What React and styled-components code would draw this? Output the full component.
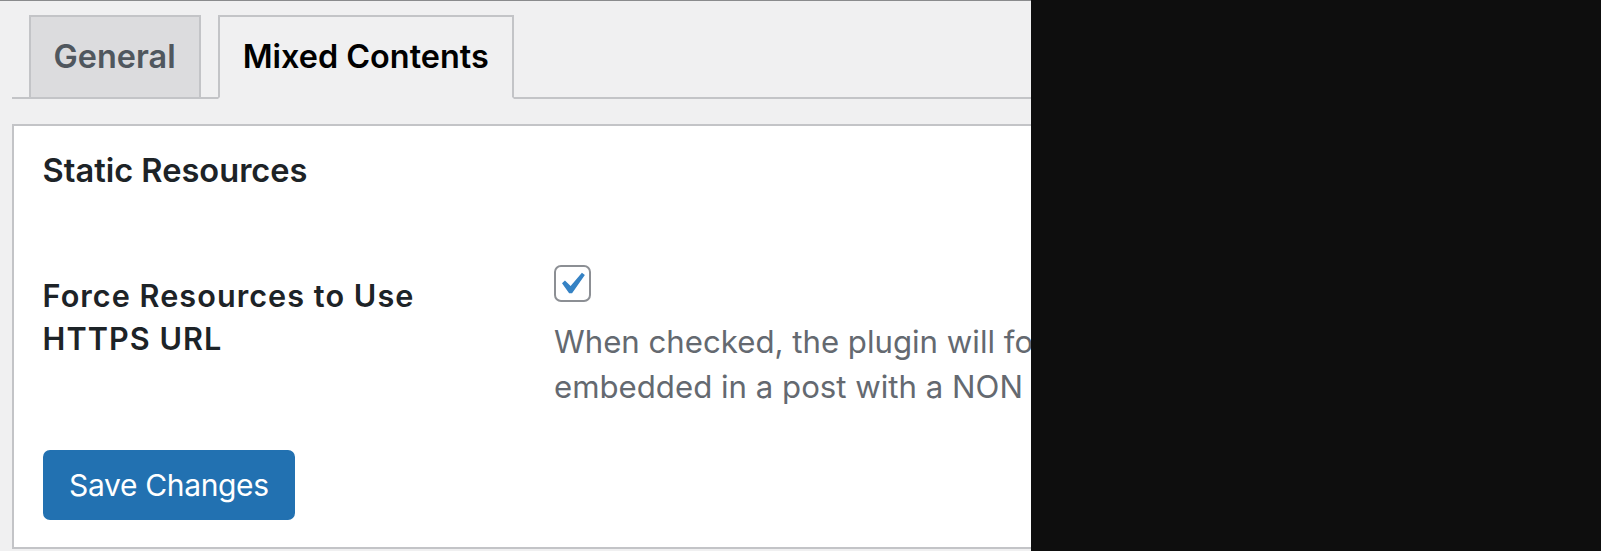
import React from "react";
import styled, { createGlobalStyle } from "styled-components";

const Global = createGlobalStyle`
  html, body { margin: 0; padding: 0; }
  body {
    background: #0e0e0e;
    font-family: Inter, "Noto Sans", "Liberation Sans", sans-serif;
  }
  * { box-sizing: border-box; }
`;

const Frame = styled.div`
  display: flex;
  width: 1601px;
  height: 551px;
  overflow: hidden;
`;

const Page = styled.div`
  flex: none;
  width: 1031px;
  height: 551px;
  overflow: hidden;
  background: #f0f0f1;
  border-top: 1px solid #8a8b8d;
  padding-left: 12px;
`;

const Blackout = styled.div`
  flex: 1;
  background: #0e0e0e;
`;

const TabBar = styled.nav`
  display: flex;
  gap: 17px;
  padding: 14px 0 0 16.6px;
  border-bottom: 2px solid #c3c4c7;
`;

const Tab = styled.a`
  display: block;
  margin-bottom: -2px;
  padding: 12px 23px 12px 23px;
  border: 2px solid #c3c4c7;
  border-bottom-color: ${(p) => (p.$active ? "#f0f0f1" : "#c3c4c7")};
  background: ${(p) => (p.$active ? "#f0f0f1" : "#dcdcde")};
  color: ${(p) => (p.$active ? "#000" : "#50575e")};
  font-size: 32.4px;
  font-weight: 600;
  line-height: 56px;
  white-space: nowrap;
  text-decoration: none;
`;

const Panel = styled.section`
  margin-top: 25px;
  margin-right: -40px;
  padding: 21px 0 27px 28.6px;
  background: #fff;
  border: 2px solid #c3c4c7;
`;

const Heading = styled.h2`
  margin: 0;
  color: #1d2327;
  font-size: 32.6px;
  font-weight: 600;
  line-height: 46px;
`;

const FormRow = styled.div`
  display: grid;
  grid-template-columns: 511.4px 1fr;
  margin-top: 72px;
`;

const Label = styled.div`
  max-width: 466px;
  padding-top: 10.4px;
  color: #1d2327;
  font-size: 30.6px;
  font-weight: 600;
  letter-spacing: 1.05px;
  line-height: 42.4px;
`;

const Field = styled.div`
  display: flex;
  flex-direction: column;
  align-items: flex-start;
`;

const Checkbox = styled.span`
  display: block;
  width: 37px;
  height: 37px;
  border: 2px solid #8c8f94;
  border-radius: 7px;
  background: #fff;
  svg { display: block; }
`;

const Description = styled.p`
  margin: 17.5px 0 0;
  color: #646970;
  font-size: 31.2px;
  line-height: 45px;
  white-space: nowrap;
`;

const Button = styled.button`
  display: block;
  margin-top: 40.2px;
  height: 70px;
  padding: 0 24.5px;
  background: #2271b1;
  border: 2px solid #2271b1;
  border-radius: 7px;
  color: #fff;
  font-family: inherit;
  font-size: 30px;
  letter-spacing: -0.35px;
  line-height: 66px;
`;

export default function App() {
  return (
    <>
      <Global />
      <Frame>
        <Page>
          <TabBar>
            <Tab href="#general">General</Tab>
            <Tab $active href="#mixed">Mixed Contents</Tab>
          </TabBar>
          <Panel>
            <Heading>Static Resources</Heading>
            <FormRow>
              <Label>Force Resources to Use HTTPS URL</Label>
              <Field>
                <Checkbox role="checkbox" aria-checked="true">
                  <svg width="33" height="33" viewBox="3.05 2.23 15 15">
                    <path
                      d="M14.83 4.89l1.34.94-5.81 8.38H9.02L5.78 9.67l1.34-1.25 2.57 2.4z"
                      fill="#3582c4"
                    />
                  </svg>
                </Checkbox>
                <Description>
                  When checked, the plugin will force all static resources (images, scripts, styles)
                  <br />
                  embedded in a post with a NON HTTPS URL to be loaded over HTTPS.
                </Description>
              </Field>
            </FormRow>
            <Button type="button">Save Changes</Button>
          </Panel>
        </Page>
        <Blackout />
      </Frame>
    </>
  );
}
